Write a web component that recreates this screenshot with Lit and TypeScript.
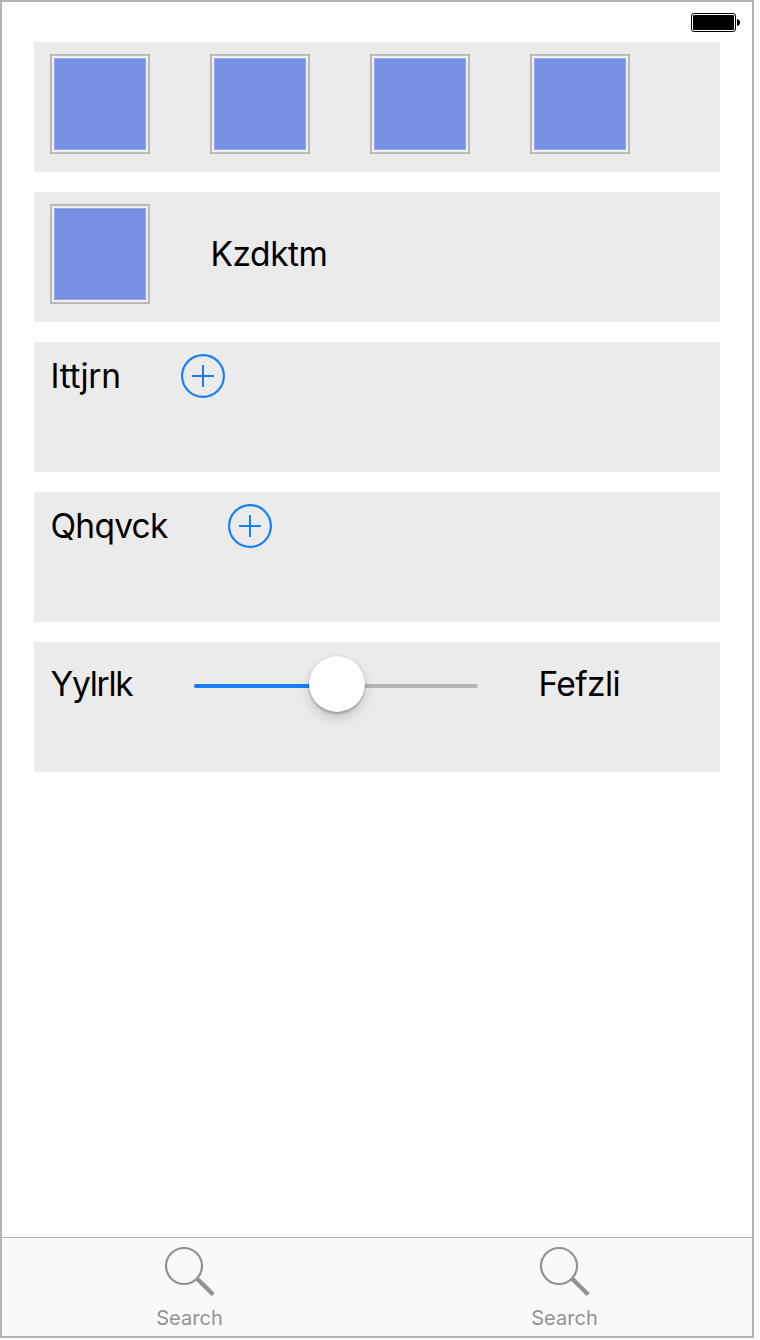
import { LitElement, html, css } from "lit";
import { customElement } from "lit/decorators.js";

@customElement("app-root")
export class AppRoot extends LitElement {
  static styles = css`
    :host {
      display: block;
      width: 760px;
      height: 1340px;
      background: #fff;
      font-family: Inter, "Liberation Sans", sans-serif;
      color: #000;
    }
    .device {
      box-sizing: border-box;
      width: 754px;
      height: 1338px;
      border: 2px solid #b3b3b3;
      display: flex;
      flex-direction: column;
      background: #fff;
    }
    .status {
      height: 40px;
      display: flex;
      justify-content: flex-end;
      align-items: flex-start;
      box-sizing: border-box;
      padding: 11px 12px 0 0;
    }
    .content {
      flex: 1;
      display: flex;
      flex-direction: column;
      gap: 20px;
      padding: 0 32px;
    }
    .row {
      box-sizing: border-box;
      height: 130px;
      padding: 12px 16px;
      background: #ebebeb;
      display: flex;
      align-items: flex-start;
      gap: 60px;
    }
    .line {
      display: flex;
      align-items: center;
      gap: 60px;
    }
    .label {
      box-sizing: border-box;
      font-size: 33.5px;
      line-height: 40px;
      padding-left: 0.5px;
      white-space: nowrap;
    }
    .kz { width: 118px; letter-spacing: -0.45px; }
    .it { width: 71px; letter-spacing: -0.3px; }
    .qh { width: 118px; letter-spacing: -0.75px; }
    .yy { width: 84px; letter-spacing: -1.25px; }
    .fe { width: 84px; letter-spacing: -0.6px; }
    svg { display: block; flex: none; }
    .tabs {
      height: 98px;
      border-top: 1px solid #b2b2b2;
      background: #f9f9f9;
      display: grid;
      grid-template-columns: 1fr 1fr;
    }
    .tab {
      display: flex;
      flex-direction: column;
      align-items: center;
      padding-top: 8px;
      color: #929292;
    }
    .caption {
      font-size: 20px;
      line-height: 24px;
      margin-top: 10px;
      letter-spacing: 0.05px;
    }
  `;

  private tile() {
    return html`<svg width="100" height="100" viewBox="0 0 100 100">
      <rect width="100" height="100" fill="#b5b5b5" />
      <rect x="1" y="1" width="98" height="98" fill="#bfbfbf" />
      <rect x="2" y="2" width="96" height="96" fill="#eaebed" />
      <rect x="3" y="3" width="94" height="94" fill="#eff2fb" />
      <rect x="4" y="4" width="92" height="92" fill="#94a8ea" />
      <rect x="5" y="5" width="90" height="90" fill="#768fe2" />
    </svg>`;
  }

  private plus() {
    return html`<svg width="44" height="44" viewBox="0 0 44 44" fill="none" stroke="#167efb" stroke-width="2">
      <circle cx="22" cy="22" r="20.9" stroke-width="2.2" />
      <path d="M11 22H33M22 11V33" />
    </svg>`;
  }

  private slider() {
    return html`<svg width="284" height="60" viewBox="0 0 284 60" overflow="visible">
      <defs>
        <filter id="soft" x="-50%" y="-50%" width="200%" height="200%">
          <feGaussianBlur stdDeviation="6" />
        </filter>
        <filter id="near" x="-50%" y="-50%" width="200%" height="200%">
          <feGaussianBlur stdDeviation="1.5" />
        </filter>
      </defs>
      <rect y="30" width="284" height="4" rx="2" fill="#b6b6b6" />
      <rect y="30" width="143" height="4" rx="2" fill="#167efb" />
      <circle cx="143" cy="36" r="28" fill="#000" opacity="0.16" filter="url(#soft)" />
      <circle cx="143" cy="32" r="27.5" fill="#000" opacity="0.26" filter="url(#near)" />
      <circle cx="143" cy="30" r="28.5" fill="#000" opacity="0.1" />
      <circle cx="143" cy="30" r="28" fill="#fff" />
    </svg>`;
  }

  private tab() {
    return html`<div class="tab">
      <svg width="52" height="50" viewBox="0 0 52 50" fill="none" stroke="#929292">
        <circle cx="20" cy="20" r="18" stroke-width="2.2" />
        <path d="M32.4 32L49.2 48.600" stroke-width="4.3" />
      </svg>
      <div class="caption">Search</div>
    </div>`;
  }

  render() {
    return html`<div class="device">
      <div class="status">
        <svg width="49" height="19" viewBox="0 0 49 19">
          <rect x="0.5" y="0.5" width="44" height="18" rx="2.5" fill="#fff" stroke="#000" />
          <rect x="2" y="2" width="41" height="15" rx="1" />
          <path d="M46 6Q49 6.500 49 9.500Q49 12.500 46 13Z" />
        </svg>
      </div>
      <div class="content">
        <div class="row">${[0, 1, 2, 3].map(() => this.tile())}</div>
        <div class="row"><div class="line">${this.tile()}<div class="label kz">Kzdktm</div></div></div>
        <div class="row"><div class="line"><div class="label it">Ittjrn</div>${this.plus()}</div></div>
        <div class="row"><div class="line"><div class="label qh">Qhqvck</div>${this.plus()}</div></div>
        <div class="row"><div class="line">
          <div class="label yy">Yylrlk</div>${this.slider()}<div class="label fe">Fefzli</div>
        </div></div>
      </div>
      <div class="tabs">${this.tab()}${this.tab()}</div>
    </div>`;
  }
}
